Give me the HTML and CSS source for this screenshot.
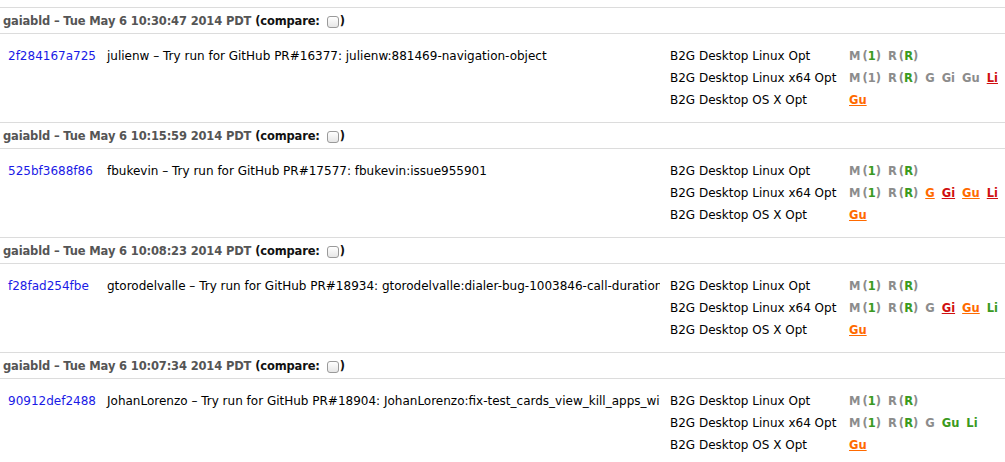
FILE: index.html
```html
<!DOCTYPE html>
<html>
<head>
<meta charset="utf-8">
<link rel="stylesheet" href="styles.css">
</head>
<body>
<div class="push">
  <div class="head"><span class="who">gaiabld – Tue May 6 10:30:47 2014 PDT</span> (compare: <span class="cb"></span>)</div>
  <div class="body">
    <div class="rev"><a class="hash">2f284167a725</a><span class="desc">julienw – Try run for GitHub PR#16377: julienw:881469-navigation-object</span></div>
    <div class="builds">
      <div class="brow"><span class="plat">B2G Desktop Linux Opt</span><span class="res"><span class="g">M<span class="p">(<span class="ok">1</span>)</span></span><span class="g">R<span class="p">(<span class="ok">R</span>)</span></span></span></div>
      <div class="brow"><span class="plat">B2G Desktop Linux x64 Opt</span><span class="res"><span class="g">M<span class="p">(1)</span></span><span class="g">R<span class="p">(<span class="ok">R</span>)</span></span><span class="g">G</span><span class="g">Gi</span><span class="g">Gu</span><span class="bad">Li</span></span></div>
      <div class="brow"><span class="plat">B2G Desktop OS X Opt</span><span class="res"><span class="warn">Gu</span></span></div>
    </div>
  </div>
</div>
<div class="push">
  <div class="head"><span class="who">gaiabld – Tue May 6 10:15:59 2014 PDT</span> (compare: <span class="cb"></span>)</div>
  <div class="body">
    <div class="rev"><a class="hash">525bf3688f86</a><span class="desc">fbukevin – Try run for GitHub PR#17577: fbukevin:issue955901</span></div>
    <div class="builds">
      <div class="brow"><span class="plat">B2G Desktop Linux Opt</span><span class="res"><span class="g">M<span class="p">(<span class="ok">1</span>)</span></span><span class="g">R<span class="p">(<span class="ok">R</span>)</span></span></span></div>
      <div class="brow"><span class="plat">B2G Desktop Linux x64 Opt</span><span class="res"><span class="g">M<span class="p">(<span class="ok">1</span>)</span></span><span class="g">R<span class="p">(<span class="ok">R</span>)</span></span><span class="warn">G</span><span class="bad">Gi</span><span class="warn">Gu</span><span class="bad">Li</span></span></div>
      <div class="brow"><span class="plat">B2G Desktop OS X Opt</span><span class="res"><span class="warn">Gu</span></span></div>
    </div>
  </div>
</div>
<div class="push">
  <div class="head"><span class="who">gaiabld – Tue May 6 10:08:23 2014 PDT</span> (compare: <span class="cb"></span>)</div>
  <div class="body">
    <div class="rev"><a class="hash">f28fad254fbe</a><span class="desc">gtorodelvalle – Try run for GitHub PR#18934: gtorodelvalle:dialer-bug-1003846-call-duration</span></div>
    <div class="builds">
      <div class="brow"><span class="plat">B2G Desktop Linux Opt</span><span class="res"><span class="g">M<span class="p">(<span class="ok">1</span>)</span></span><span class="g">R<span class="p">(<span class="ok">R</span>)</span></span></span></div>
      <div class="brow"><span class="plat">B2G Desktop Linux x64 Opt</span><span class="res"><span class="g">M<span class="p">(<span class="ok">1</span>)</span></span><span class="g">R<span class="p">(<span class="ok">R</span>)</span></span><span class="g">G</span><span class="bad">Gi</span><span class="warn">Gu</span><span class="good">Li</span></span></div>
      <div class="brow"><span class="plat">B2G Desktop OS X Opt</span><span class="res"><span class="warn">Gu</span></span></div>
    </div>
  </div>
</div>
<div class="push">
  <div class="head"><span class="who">gaiabld – Tue May 6 10:07:34 2014 PDT</span> (compare: <span class="cb"></span>)</div>
  <div class="body">
    <div class="rev"><a class="hash">90912def2488</a><span class="desc">JohanLorenzo – Try run for GitHub PR#18904: JohanLorenzo:fix-test_cards_view_kill_apps_with_lock</span></div>
    <div class="builds">
      <div class="brow"><span class="plat">B2G Desktop Linux Opt</span><span class="res"><span class="g">M<span class="p">(<span class="ok">1</span>)</span></span><span class="g">R<span class="p">(<span class="ok">R</span>)</span></span></span></div>
      <div class="brow"><span class="plat">B2G Desktop Linux x64 Opt</span><span class="res"><span class="g">M<span class="p">(<span class="ok">1</span>)</span></span><span class="g">R<span class="p">(<span class="ok">R</span>)</span></span><span class="g">G</span><span class="good">Gu</span><span class="good">Li</span></span></div>
      <div class="brow"><span class="plat">B2G Desktop OS X Opt</span><span class="res"><span class="warn">Gu</span></span></div>
    </div>
  </div>
</div>
</body>
</html>
```

FILE: styles.css
```css
html, body { margin: 0; padding: 0; background: #fff; }
body {
  padding-top: 7px;
  font-family: "DejaVu Sans", sans-serif;
  font-size: 12px;
  color: #000;
}
.push { height: 115px; }
.head {
  height: 25px;
  border-top: 1px solid #dcdcdc;
  border-bottom: 1px solid #dcdcdc;
  display: flex;
  align-items: center;
  padding-left: 3px;
  font-weight: bold;
  font-size: 11.5px;
  letter-spacing: -0.15px;
  color: #111;
  white-space: pre;
}
.who { color: #555; }
.cb {
  display: inline-block;
  width: 10px;
  height: 10px;
  margin: 3px 1px 0 3px;
  border: 1px solid #9a9a9a;
  border-radius: 3px;
  background: linear-gradient(#ffffff, #e6e6e6);
}
.body {
  display: flex;
  padding-top: 11px;
}
.rev {
  width: 660px;
  display: flex;
  overflow: hidden;
  white-space: nowrap;
  height: 22px;
  line-height: 22px;
}
.hash { color: #1a1ae6; width: 99px; padding-left: 8px; flex: none; }
.desc { flex: none; }
.builds { margin-left: 10px; }
.brow { display: flex; height: 22px; line-height: 22px; }
.plat { width: 179px; }
.res { display: flex; gap: 7px; font-weight: bold; font-size: 11.5px; }
.g { color: #8c8c8c; }
.p { margin-left: 2px; font-weight: bold; }
.ok { color: #3a9a20; }
.bad { color: #d01010; text-decoration: underline; }
.warn { color: #ff6a00; text-decoration: underline; }
.good { color: #3a9a20; }
```
